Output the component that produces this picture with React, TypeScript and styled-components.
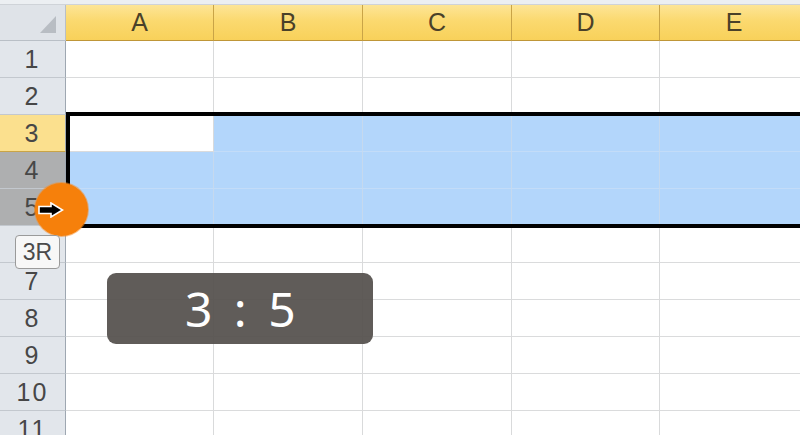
import React from "react";
import styled, { createGlobalStyle, css } from "styled-components";

const GlobalStyle = createGlobalStyle`
  *, *::before, *::after { box-sizing: border-box; }
  html, body { margin: 0; padding: 0; background: #fff; overflow: hidden; }
`;

const Sheet = styled.div`
  position: relative;
  width: 800px;
  height: 435px;
  overflow: hidden;
  background: #fff;
  font-family: "Liberation Sans", Arial, sans-serif;
`;

const TopStrip = styled.div`
  height: 5px;
  background: #eceff2;
  border-bottom: 1px solid #cfd3d8;
`;

const Grid = styled.div`
  display: grid;
  grid-template-columns: 66px 148px 149px 149px 148px 149px;
  grid-template-rows: 36px;
  grid-auto-rows: 37px;
`;

const Corner = styled.div`
  position: relative;
  background: #dfe3e8;
  border-right: 1px solid #b9bfc6;
  border-bottom: 1px solid #b9bfc6;
  &::after {
    content: "";
    position: absolute;
    right: 9px;
    bottom: 7px;
    width: 0;
    height: 0;
    border-left: 16px solid transparent;
    border-bottom: 17px solid #b8bdc3;
  }
`;

const ColHeader = styled.div`
  display: flex;
  align-items: center;
  justify-content: center;
  font-size: 25px;
  color: #4a4129;
  background: linear-gradient(#fde596 0%, #fbd96f 45%, #f8d15a 100%);
  border-right: 1px solid #c9a447;
  border-bottom: 1px solid #bf9638;
`;

type RowState = "normal" | "active" | "selected";

const rowBg: Record<RowState, string> = {
  normal: "#e2e6eb",
  active: "#fbe08e",
  selected: "#aeafb0",
};

const RowHeader = styled.div<{ $state: RowState }>`
  display: flex;
  align-items: center;
  justify-content: center;
  font-size: 25px;
  letter-spacing: 2px;
  color: #474747;
  background: ${(p) => rowBg[p.$state]};
  border-right: 1px solid #9ea7b1;
  border-bottom: 1px solid #c3c8ce;
  ${(p) =>
    p.$state === "active" &&
    css`
      border-bottom-color: #c9a447;
    `}
`;

type CellFill = "none" | "sel" | "active";

const Cell = styled.div<{ $fill: CellFill }>`
  background: ${(p) => (p.$fill === "sel" ? "#b3d6fb" : "#fff")};
  border-right: 1px solid
    ${(p) => (p.$fill === "sel" ? "#c6d9ee" : "#d9dadb")};
  border-bottom: 1px solid
    ${(p) => (p.$fill === "sel" ? "#c3dcf8" : "#dadbdc")};
`;

const SelectionFrame = styled.div`
  position: absolute;
  left: 66px;
  top: 112px;
  width: 760px;
  height: 116px;
  border: 4px solid #000;
  pointer-events: none;
`;

const Marker = styled.div`
  position: absolute;
  left: 35px;
  top: 183px;
  width: 53px;
  height: 53px;
  border-radius: 50%;
  background: #f6800b;
  box-shadow: 0 0 0 1px rgba(246, 140, 40, 0.55);
`;

const ArrowIcon = styled.svg`
  position: absolute;
  left: 3px;
  top: 19px;
`;

const RowTag = styled.div`
  position: absolute;
  left: 15px;
  top: 235px;
  width: 45px;
  height: 34px;
  display: flex;
  align-items: center;
  justify-content: center;
  font-size: 23px;
  color: #4a4a4a;
  background: #f7f7f7;
  border: 1px solid #9a9a9a;
  border-radius: 4px;
`;

const Counter = styled.div`
  position: absolute;
  left: 107px;
  top: 273px;
  width: 266px;
  height: 71px;
  display: flex;
  align-items: center;
  justify-content: center;
  border-radius: 9px;
  background: rgba(86, 82, 79, 0.94);
  color: #fff;
  font-family: "Noto Sans", "Open Sans", sans-serif;
  font-size: 48px;
  letter-spacing: 4.5px;
  padding-left: 5px;
`;

const columns = ["A", "B", "C", "D", "E"];
const rows = [1, 2, 3, 4, 5, 6, 7, 8, 9, 10, 11];

const rowState = (r: number): RowState =>
  r === 3 ? "active" : r === 4 || r === 5 ? "selected" : "normal";

const cellFill = (r: number, c: number): CellFill => {
  if (r === 3 && c === 0) return "active";
  if (r >= 3 && r <= 5) return "sel";
  return "none";
};

export default function App() {
  return (
    <>
      <GlobalStyle />
      <Sheet>
        <TopStrip />
        <Grid>
          <Corner />
          {columns.map((c) => (
            <ColHeader key={c}>{c}</ColHeader>
          ))}
          {rows.map((r) => (
            <React.Fragment key={r}>
              <RowHeader $state={rowState(r)}>{r}</RowHeader>
              {columns.map((c, i) => (
                <Cell key={c} $fill={cellFill(r, i)} />
              ))}
            </React.Fragment>
          ))}
        </Grid>
        <SelectionFrame />
        <Marker>
          <ArrowIcon width="26" height="16" viewBox="0 0 26 16">
            <path
              d="M1 4.5 H13 V1 L24.5 8 L13 15 V11.5 H1 Z"
              fill="#000"
              stroke="#fff"
              strokeWidth="1.6"
              strokeLinejoin="miter"
            />
          </ArrowIcon>
        </Marker>
        <RowTag>3R</RowTag>
        <Counter>3 : 5</Counter>
      </Sheet>
    </>
  );
}
